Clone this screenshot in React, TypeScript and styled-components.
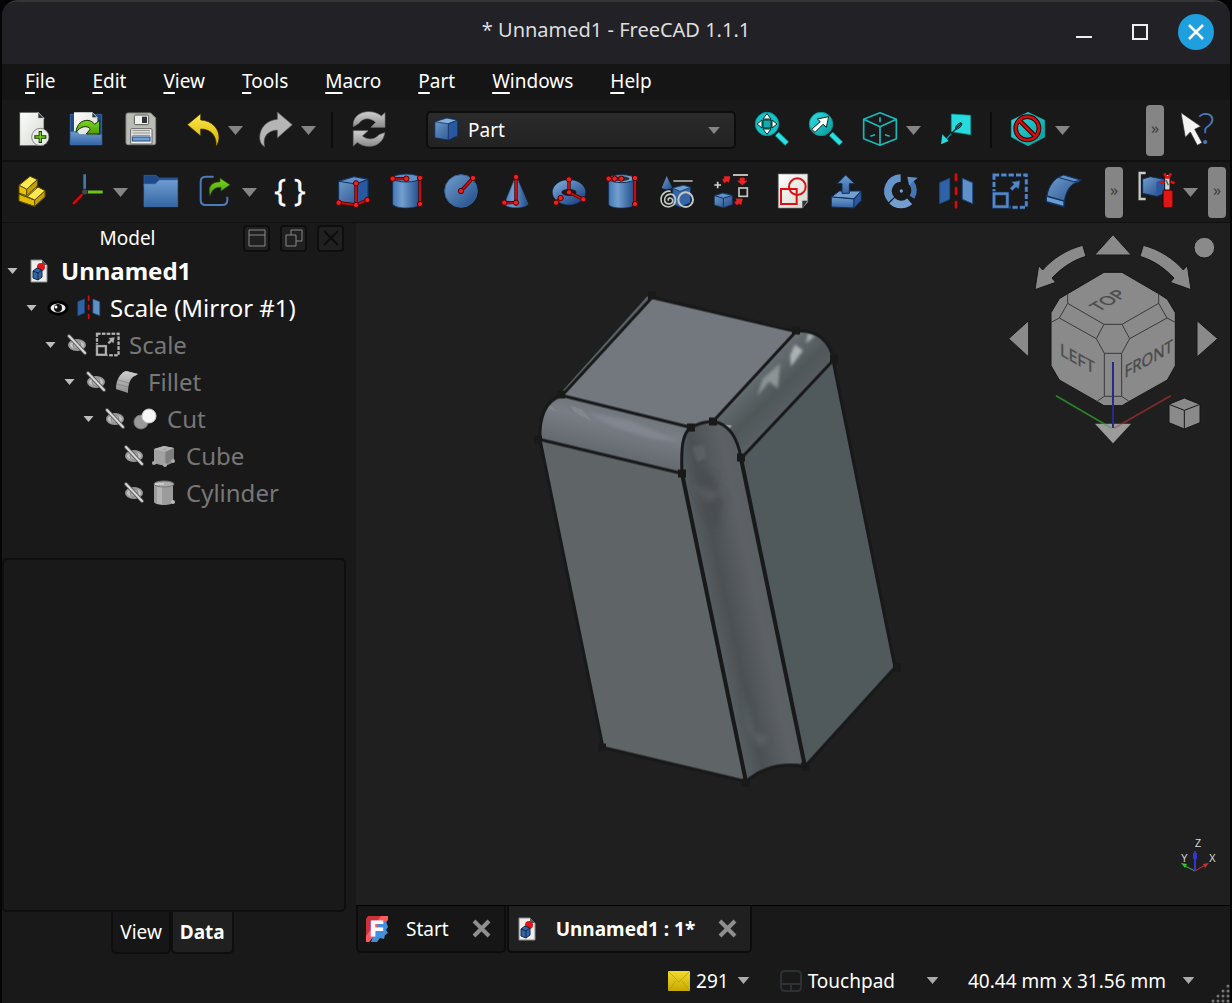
import React from "react";
import styled, { createGlobalStyle } from "styled-components";

const GlobalStyle = createGlobalStyle`
  * { box-sizing: border-box; }
  body { margin: 0; background: #050505; }
  button, select { font: inherit; color: inherit; }
  button { border: 0; padding: 0; background: none; cursor: pointer; }
`;

const Window = styled.div`
  display: flex;
  flex-direction: column;
  min-height: 100vh;
  margin: 0 2px;
  border-top: 2px solid #343434;
  border-radius: 16px 16px 0 0;
  overflow: hidden;
  background: #191919;
  color: #fff;
  font-family: "Noto Sans", "Open Sans", sans-serif;
  font-size: 19px;
  line-height: 26px;
`;

const TitleBar = styled.header`
  display: grid;
  grid-template-columns: 1fr auto 1fr;
  align-items: center;
  height: 62px;
  padding-bottom: 2px;
  background: #222126;
`;

const Title = styled.h1`
  grid-column: 2;
  margin: 0;
  padding-bottom: 4px;
  font-size: 20px;
  font-weight: 400;
  line-height: 26px;
  color: #dedede;
`;

const WindowButtons = styled.div`
  display: flex;
  justify-content: flex-end;
  align-items: center;
  gap: 20px;
  padding-right: 16px;
`;

const WindowButton = styled.button<{ $accent?: boolean }>`
  display: grid;
  place-items: center;
  width: 36px;
  height: 36px;
  border-radius: 50%;
  background: ${(p) => (p.$accent ? "#209fdf" : "transparent")};
`;

const MenuBar = styled.nav`
  display: flex;
  gap: 37px;
  height: 36px;
  padding: 3px 23px 5px;
  background: #151515;
`;

const MenuItem = styled.button`
  &::first-letter {
    text-decoration: underline;
    text-decoration-thickness: 2px;
    text-underline-offset: 4px;
  }
`;

const ToolBar = styled.div<{ $left: number; $right: number; $height: number }>`
  display: flex;
  align-items: center;
  height: ${(p) => p.$height}px;
  padding-left: ${(p) => p.$left}px;
  padding-right: ${(p) => p.$right}px;
  border-bottom: ${(p) => p.$height - 60}px solid #101010;
`;

const ToolButton = styled.button<{ $before?: number }>`
  display: block;
  flex: none;
  width: 36px;
  height: 36px;
  margin-left: ${(p) => p.$before ?? 18}px;
`;

const DropButton = styled.button`
  display: grid;
  place-items: center;
  flex: none;
  width: 16px;
  height: 36px;
  margin-left: 8px;
`;

const Separator = styled.span<{ $before: number }>`
  flex: none;
  width: 2px;
  height: 36px;
  margin-left: ${(p) => p.$before}px;
  background: #0c0c0c;
`;

const Extension = styled.button<{ $before?: number }>`
  flex: none;
  width: 18px;
  height: 51px;
  margin-left: ${(p) => (p.$before ? `${p.$before}px` : "auto")};
  border-radius: 4px;
  background: #858585;
  color: #3c3c3c;
  font-size: 16px;
  line-height: 26px;
  padding-bottom: 5px;
`;

const Combo = styled.label`
  display: flex;
  align-items: center;
  flex: none;
  width: 310px;
  height: 38px;
  margin-left: 39px;
  padding: 0 14px 0 4px;
  border: 2px solid #0d0d0d;
  border-radius: 5px;
  background: linear-gradient(#2b2b2b, #222);
`;

const ComboSelect = styled.select`
  flex: 1;
  min-width: 0;
  appearance: none;
  border: 0;
  padding: 0;
  margin-left: 8px;
  background: transparent;
  outline: none;
`;

const Svg = styled.svg`
  display: block;
  flex: none;
  overflow: visible;
`;

const Body = styled.main`
  display: flex;
  flex: 1;
  min-height: 0;
`;

const Dock = styled.aside`
  display: flex;
  flex-direction: column;
  flex: none;
  width: 354px;
  padding-right: 10px;
`;

const DockHeader = styled.div`
  display: flex;
  align-items: center;
  gap: 10px;
  height: 30px;
  padding-right: 2px;
`;

const DockTitle = styled.h2`
  flex: 1;
  margin: 0;
  padding-left: 20px;
  text-align: center;
  font-size: 19px;
  line-height: 26px;
  font-weight: 400;
`;

const DockButton = styled.button`
  display: grid;
  place-items: center;
  width: 27px;
  height: 27px;
  border: 2px solid #0e0e0e;
  border-radius: 4px;
  background: #202020;
`;

const Tree = styled.ul`
  flex: 7 1 0;
  margin: -1px 0 0;
  padding: 0;
  list-style: none;
`;

const TreeRow = styled.li<{ $level: number; $dim?: boolean; $root?: boolean }>`
  display: flex;
  align-items: center;
  height: 37px;
  padding-left: ${(p) => 3 + p.$level * 19}px;
  font-size: 24px;
  line-height: 32px;
  font-weight: ${(p) => (p.$root ? 700 : 400)};
  color: ${(p) => (p.$dim ? "#777" : "#fff")};
`;

const Expander = styled.button`
  display: grid;
  place-items: center;
  width: 14px;
  height: 24px;
`;

const EyeButton = styled.button`
  width: 20px;
  height: 24px;
  margin: 0 8px 0 10px;
`;

const TreeIcon = styled.span<{ $root?: boolean }>`
  margin: ${(p) => (p.$root ? "0 13px 0 11px" : "0 10px 0 0")};
`;

const PropertyPanel = styled.section`
  flex: 8 1 0;
  border: 2px solid #0e0e0e;
  border-radius: 5px;
`;

const DockTabs = styled.div`
  display: flex;
  justify-content: center;
  height: 42px;
  padding-right: 3px;
  margin-bottom: 1px;
`;

const DockTab = styled.button<{ $active?: boolean }>`
  padding: 0 7px;
  border: 2px solid #0e0e0e;
  border-top: 0;
  border-radius: 0 0 5px 5px;
  background: ${(p) => (p.$active ? "#202020" : "#161616")};
  font-weight: ${(p) => (p.$active ? 700 : 400)};
`;

const Workspace = styled.section`
  display: flex;
  flex-direction: column;
  flex: 1;
  min-width: 0;
`;

const Viewport = styled.div`
  position: relative;
  flex: 1;
  min-height: 400px;
  background: #1f1f1f;
  border-bottom: 1px solid #000;
`;

const Scene = styled.svg`
  position: absolute;
  inset: 0;
  width: 100%;
  height: 100%;
`;

const NavOverlay = styled.svg`
  position: absolute;
  top: 0;
  right: 0;
`;

const AxisOverlay = styled.svg`
  position: absolute;
  right: 0;
  bottom: 20px;
`;

const DocTabs = styled.div`
  display: flex;
  gap: 1px;
  height: 47px;
  margin-bottom: 2px;
`;

const DocTab = styled.div<{ $active?: boolean }>`
  display: flex;
  align-items: center;
  padding: 0 13px 0 ${(p) => (p.$active ? 9 : 8)}px;
  border: 2px solid #0c0c0c;
  border-top: 0;
  border-radius: 0 0 5px 5px;
  background: ${(p) => (p.$active ? "#202020" : "#161616")};
  font-weight: ${(p) => (p.$active ? 700 : 400)};
`;

const DocName = styled.button<{ $wide?: boolean }>`
  margin: 0 23px 0 ${(p) => (p.$wide ? 20 : 18)}px;
  font-weight: inherit;
`;

const StatusBar = styled.footer`
  display: flex;
  justify-content: flex-end;
  align-items: center;
  height: 48px;
  padding-right: 35px;
  padding-top: 3px;
  position: relative;
`;

const StatusButton = styled.button<{ $before?: number }>`
  display: flex;
  align-items: center;
  margin-left: ${(p) => p.$before ?? 0}px;
`;

const StatusText = styled.span<{ $after: number }>`
  margin: 0 ${(p) => p.$after}px 0 6px;
`;

const Grip = styled.svg`
  position: absolute;
  right: 0;
  bottom: 0;
`;

type IconProps = { at?: [number, number]; size?: number; children: React.ReactNode };

/* Icons are drawn on a grid three times finer than their 36px box. */
function Icon({ at = [0, 0], size = 36, children }: IconProps) {
  return (
    <Svg width={size} height={size} viewBox={`${at[0]} ${at[1]} 108 108`} aria-hidden="true">
      {children}
    </Svg>
  );
}

const Caret = ({ w = 15, h = 9, fill = "#858585" }) => (
  <Svg width={w} height={h} viewBox="0 0 15 9" aria-hidden="true">
    <path d="M0 0H15L7.5 9Z" fill={fill} />
  </Svg>
);

const Defs = () => (
  <defs>
    <linearGradient id="blue" x1="0" y1="0" x2="1" y2="1">
      <stop offset="0" stopColor="#729fcf" />
      <stop offset="1" stopColor="#204a87" />
    </linearGradient>
    <linearGradient id="blueDown" x1="0" y1="0" x2="0" y2="1">
      <stop offset="0" stopColor="#6f9dd0" />
      <stop offset="1" stopColor="#3465a4" />
    </linearGradient>
    <linearGradient id="blueBar" x1="0" y1="0" x2="1" y2="0">
      <stop offset="0" stopColor="#4477b5" />
      <stop offset=".35" stopColor="#729fcf" />
      <stop offset="1" stopColor="#204a87" />
    </linearGradient>
    <linearGradient id="paper" x1="0" y1="0" x2="1" y2="1">
      <stop offset="0" stopColor="#ffffff" />
      <stop offset="1" stopColor="#d3d7cf" />
    </linearGradient>
    <linearGradient id="yellow" x1="0" y1="0" x2="0" y2="1">
      <stop offset="0" stopColor="#fce94f" />
      <stop offset="1" stopColor="#d6b000" />
    </linearGradient>
    <linearGradient id="mail" x1="0" y1="0" x2="0" y2="1">
      <stop offset="0" stopColor="#f0dc30" />
      <stop offset="1" stopColor="#c9a800" />
    </linearGradient>
    <linearGradient id="green" x1="0" y1="0" x2="0" y2="1">
      <stop offset="0" stopColor="#7cd626" />
      <stop offset="1" stopColor="#4e9a06" />
    </linearGradient>
    <linearGradient id="teal" x1="0" y1="0" x2="1" y2="1">
      <stop offset="0" stopColor="#34e0e2" />
      <stop offset="1" stopColor="#06989a" />
    </linearGradient>
    <linearGradient id="grey" x1="0" y1="0" x2="0" y2="1">
      <stop offset="0" stopColor="#cfcfcf" />
      <stop offset="1" stopColor="#8c8c8c" />
    </linearGradient>
    <linearGradient id="filletLeft" gradientUnits="userSpaceOnUse" x1="626" y1="404" x2="612" y2="462">
      <stop offset="0" stopColor="#6d7278" />
      <stop offset=".35" stopColor="#797e86" />
      <stop offset="1" stopColor="#5f6569" />
    </linearGradient>
    <linearGradient id="filletRight" gradientUnits="userSpaceOnUse" x1="750" y1="375" x2="785" y2="412">
      <stop offset="0" stopColor="#697073" />
      <stop offset=".6" stopColor="#4f5759" />
      <stop offset="1" stopColor="#595f62" />
    </linearGradient>
    <linearGradient id="filletFront" gradientUnits="userSpaceOnUse" x1="706" y1="600" x2="770" y2="586">
      <stop offset="0" stopColor="#596063" />
      <stop offset=".3" stopColor="#4a5053" />
      <stop offset=".5" stopColor="#52585b" />
      <stop offset=".75" stopColor="#5d6165" />
      <stop offset="1" stopColor="#595f62" />
    </linearGradient>
    <filter id="soft" x="-30%" y="-30%" width="160%" height="160%">
      <feGaussianBlur stdDeviation="3" />
    </filter>
    <filter id="sheen" x="-30%" y="-30%" width="160%" height="160%">
      <feGaussianBlur stdDeviation="1.5" />
    </filter>
  </defs>
);

const Dots = ({ points }: { points: [number, number][] }) => (
  <>
    {points.map(([x, y]) => (
      <circle key={`${x}-${y}`} cx={x} cy={y} r="8" fill="#ef2020" stroke="#500000" strokeWidth="3" />
    ))}
  </>
);

const RedLine = ({ d }: { d: string }) => (
  <>
    <path d={d} fill="none" stroke="#400000" strokeWidth="10" />
    <path d={d} fill="none" stroke="#cc0a0a" strokeWidth="6" />
  </>
);

const NewIcon = () => (
  <Icon at={[48, 336]}>
    <path d="M59 337H114L132 355V437H59Z" fill="url(#paper)" stroke="#2e3436" strokeWidth="2" />
    <path d="M114 337V355H132Z" fill="#2e3436" stroke="#eee" strokeWidth="2" />
    <circle cx="121" cy="411" r="26" fill="#e9ebe7" stroke="#555753" strokeWidth="2" />
    <path d="M121 393V429M103 411H139" stroke="#173400" strokeWidth="10" />
    <path d="M121 396V426M106 411H136" stroke="#73d216" strokeWidth="5" />
  </Icon>
);

const OpenIcon = () => (
  <Icon at={[210, 336]}>
    <path d="M211 343H305V434H211Z" fill="#204a87" stroke="#3465a4" strokeWidth="3" />
    <path d="M222 337H276L292 353V410H222Z" fill="url(#paper)" />
    <path d="M276 337V353H292Z" fill="#2e3436" stroke="#eee" strokeWidth="2" />
    <path d="M211 395L232 395L238 404H305V434H211Z" fill="url(#blueDown)" stroke="#3b6cab" strokeWidth="2" />
    <path d="M228 397C230 372 246 360 264 361C272 362 280 367 284 373L299 361V402H259L271 387C262 376 243 377 228 397Z" fill="url(#green)" stroke="#173400" strokeWidth="3" />
  </Icon>
);

const SaveIcon = () => (
  <Icon at={[372, 336]}>
    <path d="M384 339H452L467 354V428Q467 434 461 434H384Q378 434 378 428V345Q378 339 384 339Z" fill="#babdb6" stroke="#888a85" strokeWidth="3" />
    <rect x="403" y="345" width="43" height="29" rx="4" fill="#eeeeec" stroke="#555753" strokeWidth="3" />
    <rect x="426" y="350" width="15" height="19" fill="#2e3436" />
    <rect x="392" y="386" width="64" height="46" rx="3" fill="#eeeeec" stroke="#666" strokeWidth="3" />
    <path d="M397 392H450M397 399H450M397 406H450" stroke="#888a85" strokeWidth="3" />
    <rect x="397" y="411" width="53" height="12" fill="#729fcf" stroke="#204a87" strokeWidth="3" />
  </Icon>
);

const UndoIcon = () => (
  <Icon at={[549, 336]}>
    <path d="M562 374L602 341V360C636 362 657 386 657 412C657 424 653 434 648 439C651 408 633 387 602 387V408Z" fill="url(#yellow)" stroke="#302b00" strokeWidth="2" />
  </Icon>
);

const RedoIcon = () => (
  <Icon at={[768, 336]}>
    <path d="M877 374L832 336V358C798 361 779 386 779 412C779 426 785 436 794 440C787 410 803 392 832 390V414Z" fill="#b5b5b5" stroke="#555" strokeWidth="2" />
  </Icon>
);

const RefreshIcon = () => (
  <Icon at={[1050, 336]}>
    <path d="M1057 369C1060 347 1080 335 1103 335C1119 335 1132 340 1141 348L1152 338V382H1110L1124 367C1108 352 1086 352 1074 370L1057 380Z" fill="url(#grey)" stroke="#777" strokeWidth="2" />
    <path d="M1151 398C1148 424 1128 439 1104 439C1090 439 1077 434 1069 427L1057 438V392H1101L1084 408C1100 422 1122 419 1134 404L1151 398Z" fill="url(#grey)" stroke="#777" strokeWidth="2" />
  </Icon>
);

const FitAllIcon = () => (
  <Icon at={[1056, 336]}>
    <path d="M1128 402L1158 431" stroke="#06989a" strokeWidth="17" />
    <path d="M1128 402L1157 430" stroke="#2bdfe2" strokeWidth="12" />
    <circle cx="1098" cy="372" r="35" fill="#16c4c7" stroke="#06989a" strokeWidth="3" />
    <rect x="1086" y="360" width="24" height="24" fill="#17a9ac" stroke="#042a2a" strokeWidth="3" />
    <path d="M1098 341L1110 357H1086ZM1098 403L1110 387H1086ZM1068 372L1083 360V384ZM1128 372L1113 360V384Z" fill="#fff" stroke="#042a2a" strokeWidth="3" />
  </Icon>
);

const FitSelectionIcon = () => (
  <Icon at={[-18, 336]}>
    <path d="M54 402L84 431" stroke="#06989a" strokeWidth="17" />
    <path d="M54 402L83 430" stroke="#2bdfe2" strokeWidth="12" />
    <circle cx="24" cy="372" r="35" fill="url(#teal)" stroke="#06989a" strokeWidth="3" />
    <path d="M47 350L13 357L22 365L-4 388L6 397L30 373L40 382Z" fill="#fff" stroke="#042a2a" strokeWidth="3" />
  </Icon>
);

const IsoIcon = () => (
  <Icon at={[144, 336]}>
    <g fill="none" stroke="#16b9bc" strokeWidth="5" strokeLinejoin="round">
      <path d="M201 338L250 358V416L201 436L152 416V358ZM152 358L201 380L250 358M201 380V436" />
      <path d="M201 352V367M172 409L186 404M216 404L230 409" />
    </g>
  </Icon>
);

const AlignIcon = () => (
  <Icon at={[369, 336]}>
    <path d="M415 342L473 346V404L415 395Z" fill="#27dadd" stroke="#06989a" strokeWidth="2" />
    <path d="M445 370L415 401" stroke="#042a2a" strokeWidth="4" />
    <path d="M415 401L400 417" stroke="#06989a" strokeWidth="4" />
    <ellipse cx="437" cy="378" rx="12" ry="5" transform="rotate(-45 437 378)" fill="none" stroke="#042a2a" strokeWidth="3" />
    <path d="M384 433L388 403L407 423Z" fill="#27dadd" />
  </Icon>
);

const ClipIcon = () => (
  <Icon at={[591, 336]}>
    <path d="M645 337L695 361V411L645 437L595 411V361Z" fill="url(#teal)" stroke="#0bb" strokeWidth="2" />
    <circle cx="643" cy="385" r="35" fill="none" stroke="#280000" strokeWidth="14" />
    <path d="M619 361L667 409" stroke="#280000" strokeWidth="14" />
    <circle cx="643" cy="385" r="35" fill="none" stroke="#cc0f0f" strokeWidth="8" />
    <path d="M619 361L667 409" stroke="#cc0f0f" strokeWidth="8" />
  </Icon>
);

const WhatsThisIcon = () => (
  <Icon at={[1107, 336]}>
    <text x="1154" y="433" fontFamily="Lato, sans-serif" fontWeight="300" fontSize="130" fill="#4a78b8">?</text>
    <path d="M1107 338L1166 379L1148 388L1170 428L1156 436L1135 396L1120 412Z" fill="#f4f4f4" stroke="#333" strokeWidth="2" />
  </Icon>
);

const PartIcon = () => (
  <Icon at={[42, 522]}>
    <g stroke="#5a4a00" strokeWidth="3" strokeLinejoin="round">
      <path d="M57 582L92 556L135 572V590L104 619L57 603Z" fill="#edd400" />
      <path d="M57 582L104 600V619L57 603Z" fill="#e0bd00" />
      <path d="M104 600L135 572V590L104 619Z" fill="#c4a000" />
      <path d="M104 600L57 582M82 590L114 561L135 572L104 600Z" fill="#fce94f" />
      <path d="M57 556L90 529L112 539L80 568Z" fill="#fce94f" />
      <path d="M57 556L80 568V587L57 579Z" fill="#e7c500" />
      <path d="M80 568L112 539V558L80 587Z" fill="#c4a000" />
    </g>
  </Icon>
);

const AxesIcon = () => (
  <Icon at={[204, 522]}>
    <path d="M254 523V576" stroke="#4577b3" strokeWidth="8" />
    <path d="M254 576H308" stroke="#6cc61c" strokeWidth="9" />
    <path d="M254 576L218 613" stroke="#280000" strokeWidth="12" />
    <path d="M254 576L219 612" stroke="#d40808" strokeWidth="8" />
    <circle cx="254" cy="576" r="9" fill="#454b4d" stroke="#111" strokeWidth="2" />
  </Icon>
);

const FolderIcon = () => (
  <Icon at={[429, 522]}>
    <path d="M432 526H468L478 534H533V560H432Z" fill="#204a87" stroke="#3465a4" strokeWidth="2" />
    <path d="M432 552H466L478 540H533V620H432Z" fill="url(#blueDown)" stroke="#4477b5" strokeWidth="2" />
  </Icon>
);

const LinkIcon = () => (
  <Icon at={[591, 522]}>
    <path d="M641 530H617Q602 530 602 545V600Q602 615 617 615H667Q682 615 682 600V590" fill="none" stroke="#4a7cba" strokeWidth="6" />
    <path d="M630 587C622 560 636 545 660 546V535L690 554L663 573V562C645 561 636 570 630 587Z" fill="url(#green)" stroke="#2c6000" strokeWidth="2" />
  </Icon>
);

const BracesIcon = () => (
  <Icon at={[816, 522]}>
    <text x="870" y="604" textAnchor="middle" fontFamily="Noto Sans, sans-serif" fontSize="92" fill="#fff" stroke="#fff" strokeWidth="1">{"{ }"}</text>
  </Icon>
);

const CubeShape = ({ plain = false }) => (
  <g stroke="#10305e" strokeWidth="3" strokeLinejoin="round">
    <path d="M1016 544L1062 530L1104 538V598L1068 615L1016 606Z" fill="url(#blue)" />
    <path d="M1016 544L1062 530L1104 538L1068 552Z" fill={plain ? "#86b0dd" : "#5f90c8"} />
    <path d="M1068 552L1104 538V598L1068 615Z" fill="#2a58a0" />
  </g>
);

const CubeIcon = () => (
  <Icon at={[1005, 522]}>
    <CubeShape />
    <RedLine d="M1068 550V615L1016 608M1068 615L1102 600" />
    <Dots points={[[1068, 550], [1068, 615], [1016, 608], [1102, 600]]} />
  </Icon>
);

const WorkbenchIcon = () => (
  <Icon at={[1005, 522]} size={28}>
    <CubeShape plain />
  </Icon>
);

const CylinderIcon = () => (
  <Icon at={[-33, 522]}>
    <path d="M-22 533V611C-22 628 59 628 59 611V533Z" fill="url(#blueBar)" stroke="#10305e" strokeWidth="2" />
    <ellipse cx="19" cy="534" rx="41" ry="12" fill="#5f90c8" stroke="#10305e" strokeWidth="3" />
    <RedLine d="M60 534V612M-22 536H19" />
    <Dots points={[[60, 534], [60, 612], [-22, 536], [19, 536]]} />
  </Icon>
);

const SphereIcon = () => (
  <Icon at={[129, 522]}>
    <circle cx="183" cy="573" r="49" fill="url(#blue)" stroke="#3465a4" strokeWidth="3" />
    <RedLine d="M183 573L219 534" />
    <Dots points={[[183, 573], [219, 534]]} />
  </Icon>
);

const ConeIcon = () => (
  <Icon at={[291, 522]}>
    <path d="M348 527L313 612C320 626 376 626 384 612Z" fill="url(#blueBar)" stroke="#3465a4" strokeWidth="2" />
    <RedLine d="M348 531V608H313" />
    <Dots points={[[348, 531], [348, 608], [313, 608]]} />
  </Icon>
);

const TorusIcon = () => (
  <Icon at={[453, 522]}>
    <ellipse cx="507" cy="577" rx="36" ry="24" fill="none" stroke="#10305e" strokeWidth="29" />
    <ellipse cx="507" cy="577" rx="36" ry="24" fill="none" stroke="url(#blue)" strokeWidth="26" />
    <RedLine d="M507 538V577L550 598M482 594L468 608" />
    <Dots points={[[507, 538], [507, 577], [550, 598], [482, 594], [468, 608]]} />
  </Icon>
);

const TubeIcon = () => (
  <Icon at={[615, 522]}>
    <path d="M626 536V612C626 628 704 628 704 612V536Z" fill="url(#blueBar)" stroke="#10305e" strokeWidth="2" />
    <ellipse cx="665" cy="536" rx="39" ry="12" fill="#729fcf" stroke="#10305e" strokeWidth="3" />
    <ellipse cx="665" cy="536" rx="23" ry="7" fill="#2e3436" />
    <RedLine d="M705 534V612M626 536H664" />
    <Dots points={[[705, 534], [705, 612], [626, 536], [644, 536], [664, 536]]} />
  </Icon>
);

const PrimitivesIcon = () => (
  <Icon at={[777, 522]}>
    <path d="M800 528L785 564Q800 572 817 564Z" fill="url(#blue)" />
    <path d="M820 543H878" stroke="#babdb6" strokeWidth="5" />
    <path d="M818 564L850 556L872 562V608L840 622L818 612Z" fill="#3465a4" stroke="#10305e" strokeWidth="3" />
    <path d="M818 564L850 556L872 562L840 574Z" fill="#729fcf" stroke="#10305e" strokeWidth="2" />
    <circle cx="857" cy="599" r="22" fill="none" stroke="#c4c8c0" strokeWidth="6" />
    <path d="M806 602C800 594 814 590 818 600C820 614 798 616 794 602C792 582 820 574 826 596C828 610 820 618 806 621C790 620 782 610 783 596C786 578 800 572 812 574" fill="none" stroke="#c4c8c0" strokeWidth="5" />
  </Icon>
);

const BuilderIcon = () => (
  <Icon at={[939, 522]}>
    <path d="M943 587L968 579L997 586V614L970 623L943 615Z" fill="url(#blue)" stroke="#10305e" strokeWidth="2" />
    <path d="M943 587L968 579L997 586L970 595ZM970 595V623" fill="#5f90c8" stroke="#10305e" strokeWidth="3" />
    <path d="M999 525H1044" stroke="#babdb6" strokeWidth="6" />
    <path d="M953 545V565M943 555H963" stroke="#d3d7cf" strokeWidth="5" />
    <rect x="1017" y="564" width="25" height="25" fill="none" stroke="#c4c8c0" strokeWidth="5" />
    <g fill="#ef2020" stroke="#ef2020" strokeWidth="2">
      <path d="M990 530L986 547L979 543L974 549L968 539L975 535L972 530Z" />
      <path d="M1020 534H1033V543H1041L1027 555L1013 543H1020Z" />
      <path d="M1027 597L1023 614L1017 610L1011 615L1004 607L1011 603L1008 597Z" />
    </g>
  </Icon>
);

const SketchIcon = () => (
  <Icon at={[1125, 522]}>
    <path d="M1135 522H1223V606L1207 624H1135Z" fill="url(#paper)" stroke="#888" strokeWidth="2" />
    <path d="M1223 602L1207 624V602Z" fill="#2e3436" />
    <rect x="1143" y="567" width="47" height="45" fill="none" stroke="#e01010" strokeWidth="6" />
    <circle cx="1192" cy="560" r="25" fill="none" stroke="#e01010" strokeWidth="6" />
  </Icon>
);

const ExtrudeIcon = () => (
  <Icon at={[51, 522]}>
    <g stroke="#10305e" strokeWidth="3" strokeLinejoin="round">
      <path d="M58 591L82 573H148L126 596Z" fill="#729fcf" />
      <path d="M58 591L126 597V624L58 621Z" fill="url(#blueDown)" />
      <path d="M126 597L148 573V601L126 624Z" fill="#2a58a0" />
      <path d="M101 525L128 551H112V580H90V551H75Z" fill="url(#blueDown)" />
    </g>
  </Icon>
);

const RevolveIcon = () => (
  <Icon at={[213, 522]}>
    <g fill="none" strokeWidth="23">
      <path d="M266 534A39 39 0 0 0 238 599" stroke="#6594cb" />
      <path d="M240 602A39 39 0 0 0 293 604" stroke="#729fcf" />
      <path d="M300 592A39 39 0 0 0 297 547" stroke="#4475b4" strokeWidth="17" />
    </g>
    <path d="M286 530L317 533L291 556Z" fill="#5f90c8" />
    <circle cx="268" cy="573" r="5" fill="#729fcf" />
  </Icon>
);

const MirrorIcon = ({ size = 36 }) => (
  <Icon at={[375, 522]} size={size}>
    <path d="M383 548L413 535V598L383 611Z" fill="#2f62a8" stroke="#204a87" strokeWidth="3" />
    <path d="M482 548L451 535V598L482 611Z" fill="#5f90c8" stroke="#204a87" strokeWidth="3" />
    <path d="M432 524V540M432 564V582M432 606V622" stroke="#dd0808" strokeWidth="8" strokeLinecap="round" />
  </Icon>
);

const ScaleIcon = ({ size = 36, ink = "#5588c4", edge = "#204a87" }) => (
  <Icon at={[537, 522]} size={size}>
    <rect x="546" y="525" width="97" height="97" fill="none" stroke={edge} strokeWidth="11" strokeDasharray="16 6" />
    <rect x="546" y="525" width="97" height="97" fill="none" stroke={ink} strokeWidth="7" strokeDasharray="15 7" />
    <rect x="539" y="574" width="54" height="56" fill="#191919" />
    <rect x="546" y="581" width="40" height="39" fill="#191919" stroke={edge} strokeWidth="11" />
    <rect x="546" y="581" width="40" height="39" fill="none" stroke={ink} strokeWidth="7" />
    <path d="M624 542L620 567L612 561L601 572L594 565L606 553L599 546Z" fill={ink} stroke={edge} strokeWidth="2" />
  </Icon>
);

const FilletIcon = () => (
  <Icon at={[699, 522]}>
    <path d="M755 525L808 540L800 546C776 548 758 575 755 621L703 605C703 570 722 533 755 525Z" fill="url(#blue)" stroke="#10305e" strokeWidth="3" />
    <path d="M755 525L808 541L785 545L738 532Z" fill="#5f90c8" stroke="#10305e" strokeWidth="3" />
    <path d="M703 588L756 603V620L703 605Z" fill="#6b9bd0" stroke="#10305e" strokeWidth="4" />
  </Icon>
);

const GreyFilletIcon = () => (
  <Svg width="24" height="24" viewBox="0 0 24 24" aria-hidden="true">
    <path d="M12 1L24 4L21 6C17 7 14 13 14 23L2 19C2 10 6 3 12 1Z" fill="url(#grey)" />
    <path d="M12 1L24 4L18 6L8 3Z" fill="#c6c6c6" />
    <path d="M4 10L15 13M3 14L14 17" stroke="#8a8a8a" />
  </Svg>
);

const DefeatureIcon = () => (
  <Icon at={[975, 522]}>
    <path d="M998 519H980V597H998" fill="none" stroke="#c8cac6" strokeWidth="7" />
    <path d="M989 537L1012 530L1053 538V580L1030 589L989 580Z" fill="url(#blue)" stroke="#10305e" strokeWidth="3" />
    <path d="M1030 545L1053 538V580L1030 589Z" fill="#2a58a0" />
    <path d="M1063 525V572" stroke="#d3d7cf" strokeWidth="13" />
    <path d="M1054 520L1060 532H1067L1074 520M1042 550L1054 545M1073 545L1085 550" stroke="#e01010" strokeWidth="8" fill="none" />
    <path d="M1059 540L1066 556" stroke="#555" strokeWidth="4" />
    <rect x="1050" y="570" width="30" height="53" rx="5" fill="#e01515" stroke="#280000" strokeWidth="3" />
  </Icon>
);

const DocIcon = ({ w = 18, h = 24 }) => (
  <Svg width={w} height={h} viewBox="0 0 18 24" aria-hidden="true">
    <path d="M1 1H12L17 6V23H1Z" fill="#eeeeec" stroke="#888" strokeWidth="1" />
    <path d="M12 1V6H17Z" fill="#555" />
    <circle cx="11" cy="8" r="4" fill="#e01515" />
    <path d="M3 12L7 9L12 11V18L8 21L3 19Z" fill="#3465a4" stroke="#102648" strokeWidth="1" />
    <path d="M3 12L8 14L12 11M8 14V21" stroke="#102648" fill="none" />
  </Svg>
);

const EyeIcon = ({ hidden = false }) => (
  <Svg width="20" height="24" viewBox="0 0 20 24" aria-hidden="true">
    {hidden ? (
      <>
        <ellipse cx="10" cy="12" rx="9" ry="6" fill="#9a9a9a" />
        <ellipse cx="10" cy="12" rx="7" ry="4" fill="#c4c4c4" />
        <circle cx="10" cy="12" r="4" fill="#aaa" stroke="#8a8a8a" />
        <path d="M2 3L18 20" stroke="#555" strokeWidth="4" strokeLinecap="round" />
        <path d="M2 3L18 20" stroke="#d8d8d8" strokeWidth="2" strokeLinecap="round" />
      </>
    ) : (
      <>
        <ellipse cx="10" cy="12" rx="9" ry="6" fill="#eee" stroke="#000" strokeWidth="3" />
        <circle cx="10" cy="12" r="4" fill="#111" />
        <circle cx="8" cy="11" r="1.5" fill="#fff" />
      </>
    )}
  </Svg>
);

const CutIcon = () => (
  <Svg width="24" height="24" viewBox="0 0 24 24" aria-hidden="true">
    <circle cx="8" cy="15" r="7" fill="#999" stroke="#777" />
    <circle cx="16" cy="9" r="7" fill="#f6f6f6" stroke="#ccc" />
  </Svg>
);

const GreyCubeIcon = () => (
  <Svg width="24" height="24" viewBox="0 0 24 24" aria-hidden="true">
    <path d="M2 5L12 2L22 4V18L13 22L2 19Z" fill="#a2a2a2" />
    <path d="M2 5L12 2L22 4L13 8Z" fill="#b5b5b5" />
    <path d="M13 8L22 4V18L13 22Z" fill="#7e7e7e" />
    <path d="M13 7V21L2 19M13 21L21 17" fill="none" stroke="#999" />
    <circle cx="13" cy="6" r="2" fill="#aaa" /><circle cx="2" cy="19" r="2" fill="#aaa" />
    <circle cx="13" cy="21" r="2" fill="#aaa" /><circle cx="21" cy="17" r="2" fill="#aaa" />
  </Svg>
);

const GreyCylinderIcon = () => (
  <Svg width="24" height="24" viewBox="0 0 24 24" aria-hidden="true">
    <path d="M2 3V21C3 25 21 25 21 21V3Z" fill="#9c9c9c" />
    <path d="M5 4V23H10V4Z" fill="#b4b4b4" />
    <ellipse cx="12" cy="3" rx="10" ry="3" fill="#aaa" stroke="#777" />
    <path d="M3 3H12" stroke="#ccc" strokeWidth="2" />
    <circle cx="21" cy="21" r="2" fill="#bbb" />
  </Svg>
);

const LogoIcon = () => (
  <Svg width="22" height="26" viewBox="0 0 22 26" aria-hidden="true">
    <path d="M2 0H22L3 26H0V3Z" fill="#cb333b" />
    <path d="M15 0H22V4L3 26H0V20Z" fill="#ff585d" />
    <path d="M12 8L20 5L22 11L20 14L22 17L19 19L18 23L14 22L11 26H5Z" fill="#418fde" />
    <text x="4" y="20" fontFamily="Liberation Sans, sans-serif" fontWeight="700" fontSize="22" fill="#fff" stroke="#fff" strokeWidth="1">F</text>
  </Svg>
);

const CloseMark = () => (
  <Svg width="19" height="19" viewBox="0 0 19 19" aria-hidden="true">
    <path d="M2 2L17 17M17 2L2 17" stroke="#8f8f8f" strokeWidth="4" />
  </Svg>
);

const vertices: [number, number][] = [
  [652, 295], [796, 330], [834, 358], [561, 394], [538, 439], [691, 427],
  [713, 421], [741, 457], [682, 473], [602, 747], [746, 782], [805, 766], [897, 667],
];

const ModelScene = () => (
  <Scene viewBox="356 223 874 681" role="img" aria-label="3D view of the filleted part">
    <Defs />
    <path d="M647 296L561 392L564 395L652 297L795 329Z" fill="#596063" />
    <path d="M652 297L796 331L713 421Q702 421 691 427L562 395Z" fill="#73777e" />
    <path d="M540 439L682 473L746 781L603 747Z" fill="#5f6467" />
    <path d="M833 360L895 667L805 766L741 458Z" fill="#50595b" />
    <path d="M562 395L691 427C682 433 681 448 682 473L540 439C539 414 546 400 562 395Z" fill="url(#filletLeft)" />
    <path d="M796 331C816 328 832 342 833 360L741 458C738 438 729 423 713 421Z" fill="url(#filletRight)" />
    <path d="M691 427Q702 421 713 421C729 423 738 438 741 458L805 766C783 762 764 766 746 781L682 473C681 448 682 433 691 427Z" fill="url(#filletFront)" />
    <path d="M570 405L582 409L592 421L574 411ZM548 403L557 411L547 408Z" fill="#858b92" opacity=".7" />
    <g filter="url(#sheen)">
      <path d="M588 412L630 420L665 435L680 442L650 438L612 426Z" fill="#8b8f99" opacity=".5" />
      <path d="M795 344L803 350L791 366L790 355ZM808 333L815 335L806 343Z" fill="#adb3b4" />
      <path d="M780 363L778 388L769 381L757 396L763 378Z" fill="#8c9495" />
      <path d="M692 447L704 444L706 457L697 462Z" fill="#62686b" opacity=".6" />
    </g>
    <path d="M725 424L732 425L729 429Z" fill="#98a0a2" />
    <g filter="url(#soft)">
      <path d="M696 466L712 474L722 500L717 530L704 506Z" fill="#484e51" />
      <path d="M693 486L724 492L708 502Z" fill="#606669" opacity=".6" />
      <path d="M744 690L754 732L768 738L760 746L748 728Z" fill="#646b6e" opacity=".7" />
    </g>
    <g fill="none" stroke="#191919" strokeWidth="3" strokeLinejoin="round">
      <path d="M652 297L796 331L713 421M691 427L562 395L652 297" />
      <path d="M691 427Q702 421 713 421C729 423 738 438 741 458L833 360C832 342 816 328 796 331" />
      <path d="M691 427C682 433 681 448 682 473L540 439C539 414 546 400 562 395" />
      <path d="M682 473L746 781M741 458L805 766" strokeWidth="4" />
      <path d="M540 439L603 747L746 781C764 766 783 762 805 766L895 667L833 360" />
    </g>
    {vertices.map(([x, y]) => (
      <rect key={`${x}-${y}`} x={x - 4} y={y - 4} width="8" height="8" fill="#191919" />
    ))}
  </Scene>
);

const NavigationCube = () => (
  <NavOverlay width="250" height="230" viewBox="0 9 750 690" role="img" aria-label="Navigation cube">
    <g fill="#8a8a8a" stroke="#161616" strokeWidth="3" strokeLinejoin="round">
      <path d="M399 44L454 105H344Z" />
      <path d="M86 356L146 302V411Z" />
      <path d="M713 356L651 302V411Z" />
      <circle cx="673" cy="83" r="31" />
      <path d="M308 76L318 109C278 121 246 143 216 174L227 187L165 209L176 137L188 150C218 115 262 88 308 76Z" />
      <path d="M490 76L480 109C520 121 552 143 582 174L571 187L633 209L622 137L610 150C580 115 536 88 490 76Z" />
      <path d="M372 157H426L536 221L562 238L586 278V437L562 480L446 545L426 557H372L352 545L238 480L213 437V278L238 236L263 221Z" />
    </g>
    <g fill="none" stroke="#3a3a3a" strokeWidth="3">
      <path d="M263 221V250L372 313H426L536 250V221M263 250L238 294L213 307M238 294L349 356L372 313M426 313L449 356L561 294L536 250M561 294L586 307" />
      <path d="M349 356L373 400H425L449 356M373 400V529M425 400V529M373 529H425M352 543L373 529M425 529L446 543" />
    </g>
    <g fontFamily="Noto Sans, sans-serif" fontSize="50" fill="#4b4b4b" textAnchor="middle">
      <text transform="matrix(.9 -.52 .9 .52 400 250)" stroke="#4b4b4b" strokeWidth="1">TOP</text>
      <text transform="matrix(.96 .54 0 1.02 292 434)" stroke="#4b4b4b" strokeWidth="1">LEFT</text>
      <text transform="matrix(.9 -.5 0 1.02 506 434)" stroke="#4b4b4b" strokeWidth="1">FRONT</text>
    </g>
    <path d="M345 611H453L399 670Z" fill="#8a8a8a" />
    <path d="M228 527L395 625" stroke="#2a832a" strokeWidth="5" />
    <path d="M572 527L402 625" stroke="#822b2b" strokeWidth="5" />
    <path d="M346 612H452L399 669Z" fill="#aaa" opacity=".55" />
    <path d="M399 426V624" stroke="#29298a" strokeWidth="6" />
    <g fill="#8a8a8a" stroke="#161616" strokeWidth="3" strokeLinejoin="round">
      <path d="M613 534L660 553V608L613 627L567 608V553Z" />
      <path d="M567 553L613 571L660 553M613 571V627" />
    </g>
  </NavOverlay>
);

const AxisCross = () => (
  <AxisOverlay width="55" height="50" viewBox="0 0 55 50" role="img" aria-label="Axis cross">
    <path d="M20 36L8 30" stroke="#2fc42f" strokeWidth="1" />
    <path d="M6 28L12 29L10 33Z" fill="#2fc42f" />
    <path d="M20 36L32 29" stroke="#c83232" strokeWidth="1" />
    <path d="M34 28L28 29L30 33Z" fill="#c83232" />
    <path d="M20 36V16" stroke="#3434d0" strokeWidth="2" />
    <path d="M18 18H22V24H18Z" fill="#3434d0" />
    <g fontFamily="Liberation Sans, sans-serif" fontSize="10" fill="#ddd">
      <text x="20" y="12">Z</text>
      <text x="6" y="27">Y</text>
      <text x="34" y="27">X</text>
    </g>
  </AxisOverlay>
);

type TreeNode = { level: number; label: string; icon: React.ReactNode; hidden?: boolean; leaf?: boolean };

const nodes: TreeNode[] = [
  { level: 0, label: "Unnamed1", icon: <DocIcon /> },
  { level: 1, label: "Scale (Mirror #1)", icon: <MirrorIcon size={24} /> },
  { level: 2, label: "Scale", icon: <ScaleIcon size={24} ink="#b4b4b4" edge="#8a8a8a" />, hidden: true },
  { level: 3, label: "Fillet", icon: <GreyFilletIcon />, hidden: true },
  { level: 4, label: "Cut", icon: <CutIcon />, hidden: true },
  { level: 5, label: "Cube", icon: <GreyCubeIcon />, hidden: true, leaf: true },
  { level: 5, label: "Cylinder", icon: <GreyCylinderIcon />, hidden: true, leaf: true },
];

const menus = ["File", "Edit", "View", "Tools", "Macro", "Part", "Windows", "Help"];

const Drop = ({ label }: { label: string }) => (
  <DropButton aria-label={label}>
    <Caret />
  </DropButton>
);

export default function App() {
  return (
    <>
      <GlobalStyle />
      <Window>
        <TitleBar>
          <Title>* Unnamed1 - FreeCAD 1.1.1</Title>
          <WindowButtons>
            <WindowButton aria-label="Minimize">
              <Svg width="16" height="16" viewBox="0 0 16 16"><path d="M0 13H16" stroke="#eee" strokeWidth="2" /></Svg>
            </WindowButton>
            <WindowButton aria-label="Maximize">
              <Svg width="16" height="16" viewBox="0 0 16 16"><rect x="1" y="1" width="14" height="14" fill="none" stroke="#eee" strokeWidth="2" /></Svg>
            </WindowButton>
            <WindowButton $accent aria-label="Close">
              <Svg width="16" height="16" viewBox="0 0 16 16"><path d="M1 1L15 15M15 1L1 15" stroke="#fff" strokeWidth="2.5" /></Svg>
            </WindowButton>
          </WindowButtons>
        </TitleBar>

        <MenuBar aria-label="Main menu">
          {menus.map((m) => <MenuItem key={m}>{m}</MenuItem>)}
        </MenuBar>

        <ToolBar $left={14} $right={13} $height={62}>
          <ToolButton $before={0} aria-label="New"><NewIcon /></ToolButton>
          <ToolButton aria-label="Open"><OpenIcon /></ToolButton>
          <ToolButton aria-label="Save"><SaveIcon /></ToolButton>
          <ToolButton $before={23} aria-label="Undo"><UndoIcon /></ToolButton>
          <Drop label="Undo history" />
          <ToolButton $before={13} aria-label="Redo"><RedoIcon /></ToolButton>
          <Drop label="Redo history" />
          <Separator $before={15} />
          <ToolButton aria-label="Refresh"><RefreshIcon /></ToolButton>
          <Combo>
            <WorkbenchIcon />
            <ComboSelect aria-label="Workbench" defaultValue="Part">
              <option>Part</option>
            </ComboSelect>
            <Caret w={12} h={7} />
          </Combo>
          <ToolButton $before={17} aria-label="Fit all"><FitAllIcon /></ToolButton>
          <ToolButton aria-label="Fit selection"><FitSelectionIcon /></ToolButton>
          <ToolButton aria-label="Isometric"><IsoIcon /></ToolButton>
          <Drop label="Standard views" />
          <ToolButton $before={15} aria-label="Align to selection"><AlignIcon /></ToolButton>
          <Separator $before={18} />
          <ToolButton aria-label="Clipping plane"><ClipIcon /></ToolButton>
          <Drop label="Clipping options" />
          <Extension aria-label="More view tools">»</Extension>
          <ToolButton $before={17} aria-label="What's this"><WhatsThisIcon /></ToolButton>
        </ToolBar>

        <ToolBar $left={12} $right={4} $height={61}>
          <ToolButton $before={0} aria-label="Create part"><PartIcon /></ToolButton>
          <ToolButton aria-label="Datum"><AxesIcon /></ToolButton>
          <Drop label="Datum options" />
          <ToolButton $before={15} aria-label="Create group"><FolderIcon /></ToolButton>
          <ToolButton aria-label="Make link"><LinkIcon /></ToolButton>
          <Drop label="Link options" />
          <ToolButton $before={15} aria-label="Variable set"><BracesIcon /></ToolButton>
          <ToolButton $before={27} aria-label="Cube"><CubeIcon /></ToolButton>
          <ToolButton aria-label="Cylinder"><CylinderIcon /></ToolButton>
          <ToolButton aria-label="Sphere"><SphereIcon /></ToolButton>
          <ToolButton aria-label="Cone"><ConeIcon /></ToolButton>
          <ToolButton aria-label="Torus"><TorusIcon /></ToolButton>
          <ToolButton aria-label="Tube"><TubeIcon /></ToolButton>
          <ToolButton aria-label="Primitives"><PrimitivesIcon /></ToolButton>
          <ToolButton aria-label="Shape builder"><BuilderIcon /></ToolButton>
          <ToolButton $before={26} aria-label="Sketch"><SketchIcon /></ToolButton>
          <ToolButton aria-label="Extrude"><ExtrudeIcon /></ToolButton>
          <ToolButton aria-label="Revolve"><RevolveIcon /></ToolButton>
          <ToolButton aria-label="Mirror"><MirrorIcon /></ToolButton>
          <ToolButton aria-label="Scale"><ScaleIcon /></ToolButton>
          <ToolButton aria-label="Fillet"><FilletIcon /></ToolButton>
          <Extension aria-label="More part tools">»</Extension>
          <ToolButton $before={15} aria-label="Defeaturing"><DefeatureIcon /></ToolButton>
          <Drop label="Compound tools" />
          <Extension $before={10} aria-label="More boolean tools">»</Extension>
        </ToolBar>

        <Body>
          <Dock>
            <DockHeader>
              <DockTitle>Model</DockTitle>
              <DockButton aria-label="Overlay">
                <Svg width="18" height="18" viewBox="0 0 18 18"><path d="M1 1H17V17H1ZM1 6H17" fill="none" stroke="#888" strokeWidth="1" /></Svg>
              </DockButton>
              <DockButton aria-label="Float">
                <Svg width="18" height="18" viewBox="0 0 18 18">
                  <path d="M6 1H17V12H6Z" fill="none" stroke="#888" strokeWidth="1" />
                  <path d="M1 6H11V17H1Z" fill="#202020" stroke="#888" strokeWidth="1" />
                </Svg>
              </DockButton>
              <DockButton aria-label="Close panel">
                <Svg width="16" height="16" viewBox="0 0 16 16"><path d="M1 1L15 15M15 1L1 15" stroke="#0c0c0c" strokeWidth="2" /></Svg>
              </DockButton>
            </DockHeader>
            <Tree>
              {nodes.map((n) => (
                <TreeRow key={n.label} $level={n.level} $dim={n.hidden} $root={n.level === 0}>
                  <Expander aria-label={`Toggle ${n.label}`} disabled={n.leaf}>
                    {!n.leaf && <Caret w={13} h={6} fill="#bdbdbd" />}
                  </Expander>
                  {n.level > 0 && (
                    <EyeButton aria-label={`Visibility of ${n.label}`}><EyeIcon hidden={n.hidden} /></EyeButton>
                  )}
                  <TreeIcon $root={n.level === 0}>{n.icon}</TreeIcon>
                  <span>{n.label}</span>
                </TreeRow>
              ))}
            </Tree>
            <PropertyPanel aria-label="Properties" />
            <DockTabs>
              <DockTab>View</DockTab>
              <DockTab $active>Data</DockTab>
            </DockTabs>
          </Dock>

          <Workspace>
            <Viewport>
              <ModelScene />
              <NavigationCube />
              <AxisCross />
            </Viewport>
            <DocTabs>
              <DocTab>
                <LogoIcon />
                <DocName>Start</DocName>
                <button aria-label="Close Start"><CloseMark /></button>
              </DocTab>
              <DocTab $active>
                <DocIcon />
                <DocName $wide>Unnamed1 : 1*</DocName>
                <button aria-label="Close Unnamed1"><CloseMark /></button>
              </DocTab>
            </DocTabs>
          </Workspace>
        </Body>

        <StatusBar>
          <StatusButton>
            <Svg width="22" height="20" viewBox="0 0 22 20" aria-hidden="true">
              <rect width="22" height="20" rx="1" fill="url(#mail)" />
              <path d="M1 1L11 11L21 1M1 19L8 10M21 19L14 10" fill="none" stroke="#b89a00" strokeWidth=".7" />
            </Svg>
            <StatusText $after={8}>291</StatusText>
            <Caret w={13} h={7} fill="#aaa" />
          </StatusButton>
          <StatusButton $before={30}>
            <Svg width="22" height="22" viewBox="0 0 22 22" aria-hidden="true">
              <path d="M5 1H17Q21 1 21 5V17Q21 21 17 21H5Q1 21 1 17V5Q1 1 5 1ZM1 14H21M11 14V21" fill="none" stroke="#2c3234" strokeWidth="2" />
            </Svg>
            <StatusText $after={31}>Touchpad</StatusText>
            <Caret w={13} h={7} fill="#aaa" />
          </StatusButton>
          <StatusButton $before={23}>
            <StatusText $after={16}>40.44 mm x 31.56 mm</StatusText>
            <Caret w={13} h={7} fill="#aaa" />
          </StatusButton>
          <Grip width="20" height="20" viewBox="0 0 20 20" aria-hidden="true">
            {[[18, 3], [13, 8], [18, 8], [8, 13], [13, 13], [18, 13], [3, 18], [8, 18], [13, 18], [18, 18]].map(([x, y]) => (
              <circle key={`${x}-${y}`} cx={x} cy={y} r="1.5" fill="#777" />
            ))}
          </Grip>
        </StatusBar>
      </Window>
    </>
  );
}
